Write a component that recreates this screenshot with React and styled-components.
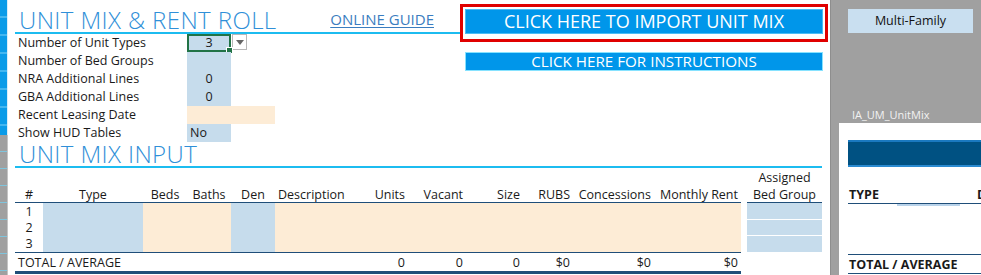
import React from 'react';
import styled, { createGlobalStyle } from 'styled-components';

const blueCell = '#c6dcec';
const peach = '#fdecd6';
const navy = '#1f4e79';
const cyan = '#1cbcf0';
const titleBlue = '#2f8fd8';

const GlobalStyle = createGlobalStyle`
  html, body {
    margin: 0;
    padding: 0;
    background: #a3a3a3;
  }
  body {
    font-family: 'Open Sans', 'Noto Sans', sans-serif;
    color: #1a1a1a;
  }
`;

const settings = [
  { label: 'Number of Unit Types', value: '3', kind: 'selected' },
  { label: 'Number of Bed Groups', value: '', kind: 'blue' },
  { label: 'NRA Additional Lines', value: '0', kind: 'blue' },
  { label: 'GBA Additional Lines', value: '0', kind: 'blue' },
  { label: 'Recent Leasing Date', value: '', kind: 'peach' },
  { label: 'Show HUD Tables', value: 'No', kind: 'blue', left: true }
];

// widths of table columns, left to right
const cols = [28, 100, 44, 44, 44, 87, 46, 58, 57, 50, 81, 87, 6, 75];

const headers = [
  { text: '#', align: 'center' },
  { text: 'Type', align: 'center' },
  { text: 'Beds', align: 'center' },
  { text: 'Baths', align: 'center' },
  { text: 'Den', align: 'center' },
  { text: 'Description', align: 'left' },
  { text: 'Units', align: 'right' },
  { text: 'Vacant', align: 'right' },
  { text: 'Size', align: 'right' },
  { text: 'RUBS', align: 'right' },
  { text: 'Concessions', align: 'right' },
  { text: 'Monthly Rent', align: 'right' }
];

const fills = [null, blueCell, peach, peach, blueCell, peach, peach, peach, peach, peach, peach, peach];

const totals = ['TOTAL / AVERAGE', '', '', '', '', '', '0', '0', '0', '$0', '$0', '$0'];

const App = () => {
  return (
    <>
      <GlobalStyle />
      <Page>
        <EdgeStrip>
          <EdgeBlue />
          <EdgeGray />
        </EdgeStrip>

        <Sheet>
          <TopArea>
            <LeftCol>
              <TitleBar>
                <Title>UNIT MIX &amp; RENT ROLL</Title>
                <GuideLink>ONLINE GUIDE</GuideLink>
              </TitleBar>
              <Settings>
                {settings.map((s) => (
                  <React.Fragment key={s.label}>
                    <SettingLabel>{s.label}</SettingLabel>
                    <SettingValue $kind={s.kind} $left={s.left}>
                      {s.value}
                      {s.kind === 'selected' && <Handle />}
                    </SettingValue>
                    {s.kind === 'selected' ? (
                      <DropCell>
                        <DropButton>
                          <svg width="8" height="5" viewBox="0 0 8 5">
                            <path d="M0 0h8L4 5z" fill="#666" />
                          </svg>
                        </DropButton>
                      </DropCell>
                    ) : s.kind !== 'peach' ? (
                      <span />
                    ) : null}
                  </React.Fragment>
                ))}
              </Settings>
            </LeftCol>
            <RightCol>
              <Highlight>
                <BigButton>CLICK HERE TO IMPORT UNIT MIX</BigButton>
              </Highlight>
              <SmallButton>CLICK HERE FOR INSTRUCTIONS</SmallButton>
            </RightCol>
          </TopArea>

          <SectionBar>
            <Title>UNIT MIX INPUT</Title>
          </SectionBar>

          <Table>
            {cols.map((_, i) => (
              <HeadCell key={`a${i}`} $align="center" $plain>
                {i === 13 ? 'Assigned' : ''}
              </HeadCell>
            ))}
            {headers.map((h) => (
              <HeadCell key={h.text} $align={h.align}>
                {h.text}
              </HeadCell>
            ))}
            <Gap />
            <HeadCell $align="center">Bed Group</HeadCell>

            {[1, 2, 3].map((n) => (
              <React.Fragment key={n}>
                {fills.map((f, i) => (
                  <DataCell key={i} $fill={f} $last={n === 3} $align="center">
                    {i === 0 ? n : ''}
                  </DataCell>
                ))}
                <Gap />
                <GroupCell />
              </React.Fragment>
            ))}

            {totals.map((t, i) => (
              <TotalCell key={i} $align={i === 0 ? 'left' : 'right'}>
                {t}
              </TotalCell>
            ))}
            <Gap />
            <Gap />
          </Table>
        </Sheet>

        <SidePane>
          <TypeBox>Multi-Family</TypeBox>
          <PaneName>IA_UM_UnitMix</PaneName>
          <PreviewCard>
            <PreviewBand />
            <PreviewRow $head>
              <PreviewType>TYPE</PreviewType>
              <PreviewMore>D</PreviewMore>
              <PreviewMark />
            </PreviewRow>
            <PreviewBody />
            <PreviewRow $total>
              <PreviewType>TOTAL / AVERAGE</PreviewType>
            </PreviewRow>
          </PreviewCard>
        </SidePane>
      </Page>
    </>
  );
};

export default App;

const Page = styled.div`
  width: 981px;
  height: 275px;
  display: flex;
  overflow: hidden;
  background: #a3a3a3;
`;

const EdgeStrip = styled.div`
  width: 8px;
  display: flex;
  flex-direction: column;
  flex-shrink: 0;
`;

const EdgeBlue = styled.div`
  height: 135px;
  width: 7px;
  background: repeating-linear-gradient(
    to bottom,
    #0a9be8 0,
    #0a9be8 16px,
    #43b6f0 16px,
    #43b6f0 18px
  );
  border-right: 1px solid #d8eefa;
`;

const EdgeGray = styled.div`
  flex: 1;
  width: 7px;
  background: repeating-linear-gradient(
    to bottom,
    #a0a0a0 0,
    #a0a0a0 16px,
    #7fc4dc 16px,
    #7fc4dc 17px
  );
  border-right: 1px solid #c4c4c4;
`;

const Sheet = styled.div`
  width: 822px;
  height: 275px;
  background: #fff;
  padding-left: 7px;
  box-sizing: border-box;
  flex-shrink: 0;
`;

const TopArea = styled.div`
  display: flex;
`;

const LeftCol = styled.div`
  width: 445px;
`;

const TitleBar = styled.div`
  height: 32px;
  border-bottom: 2px solid ${cyan};
  display: flex;
  align-items: flex-end;
  justify-content: space-between;
  padding-left: 4px;
  padding-right: 26px;
`;

const Title = styled.div`
  font-size: 24px;
  font-weight: 300;
  line-height: 24px;
  color: ${titleBlue};
  letter-spacing: 0.4px;
  white-space: nowrap;
`;

const GuideLink = styled.a`
  font-size: 15px;
  color: #3a7dc0;
  text-decoration: underline;
  text-underline-offset: 2px;
  line-height: 16px;
  padding-bottom: 5px;
  cursor: pointer;
`;

const Settings = styled.div`
  display: grid;
  grid-template-columns: 172px 44px 44px;
  grid-auto-rows: 18px;
`;

const SettingLabel = styled.div`
  font-size: 12.5px;
  line-height: 18px;
  padding-left: 3px;
  white-space: nowrap;
`;

const SettingValue = styled.div`
  position: relative;
  font-size: 12.5px;
  line-height: 18px;
  text-align: ${(p) => (p.$left ? 'left' : 'center')};
  padding-left: ${(p) => (p.$left ? '3px' : '0')};
  background: ${(p) => (p.$kind === 'peach' ? peach : blueCell)};
  grid-column: ${(p) => (p.$kind === 'peach' ? 'span 2' : 'auto')};
  box-shadow: ${(p) => (p.$kind === 'selected' ? 'inset 0 0 0 2px #217346' : 'none')};
`;

const Handle = styled.span`
  position: absolute;
  right: -2px;
  bottom: -2px;
  width: 5px;
  height: 5px;
  background: #217346;
  border: 1px solid #fff;
`;

const DropCell = styled.div`
  padding-left: 1px;
`;

const DropButton = styled.div`
  width: 15px;
  height: 16px;
  box-sizing: border-box;
  border: 1px solid #b8b8b8;
  background: #fff;
  display: flex;
  align-items: center;
  justify-content: center;
`;

const RightCol = styled.div`
  width: 368px;
  padding-top: 4px;
`;

const Highlight = styled.div`
  border: 3px solid #e00000;
  padding: 2px 2px 5px;
`;

const BigButton = styled.div`
  height: 25px;
  box-sizing: border-box;
  background: #0096ea;
  border: 1px solid #4bbcf5;
  color: #fff;
  font-size: 18px;
  line-height: 23px;
  text-align: center;
  cursor: pointer;
`;

const SmallButton = styled.div`
  margin: 10px 0 0 5px;
  width: 358px;
  height: 19px;
  box-sizing: border-box;
  background: #0096ea;
  border: 1px solid #86e2ff;
  color: #fff;
  font-size: 15.2px;
  line-height: 17px;
  text-align: center;
  cursor: pointer;
`;

const SectionBar = styled.div`
  width: 803px;
  height: 24px;
  border-bottom: 2px solid ${cyan};
  display: flex;
  align-items: flex-end;
  padding-left: 4px;
`;

const Table = styled.div`
  display: grid;
  grid-template-columns: ${cols.map((c) => `${c}px`).join(' ')};
  grid-template-rows: 17px 18px 16.5px 16.5px 16.5px 21px;
  font-size: 12.5px;
`;

const alignToJustify = { left: 'flex-start', center: 'center', right: 'flex-end' };

const Cell = styled.div`
  display: flex;
  align-items: center;
  justify-content: ${(p) => alignToJustify[p.$align] || 'flex-start'};
  padding: 0 3px;
  white-space: nowrap;
  box-sizing: border-box;
`;

const HeadCell = styled(Cell)`
  border-bottom: ${(p) => (p.$plain ? 'none' : `1.5px solid ${navy}`)};
  padding-top: 1px;
`;

const Gap = styled.div``;

const DataCell = styled(Cell)`
  background: ${(p) => p.$fill || 'transparent'};
  border-bottom: ${(p) => (p.$last ? `1.5px solid ${navy}` : 'none')};
`;

const GroupCell = styled.div`
  background: ${blueCell};
  border-bottom: 1.5px solid #fff;
`;

const TotalCell = styled(Cell)`
  border-bottom: 3px solid ${navy};
  padding-top: 1px;
`;

const SidePane = styled.div`
  flex: 1;
  background: #a0a0a0;
  border-left: 1px solid #8e8e8e;
  display: flex;
  flex-direction: column;
  overflow: hidden;
`;

const TypeBox = styled.div`
  margin: 9px 0 0 17px;
  width: 125px;
  height: 24px;
  background: #c9dff0;
  font-size: 12.5px;
  line-height: 24px;
  text-align: center;
  color: #111;
`;

const PaneName = styled.div`
  margin: 75px 0 0 21px;
  font-size: 11px;
  line-height: 14px;
  color: #f2f2f2;
  white-space: nowrap;
`;

const PreviewCard = styled.div`
  flex: 1;
  margin-left: 8px;
  margin-top: 1px;
  background: #fff;
  padding: 17px 0 0 9px;
  display: flex;
  flex-direction: column;
  overflow: hidden;
`;

const PreviewBand = styled.div`
  height: 27px;
  box-sizing: border-box;
  background: #005182;
  border-top: 2px solid #1a79c0;
  border-bottom: 2px solid #2a8ad0;
`;

const PreviewRow = styled.div`
  position: relative;
  display: flex;
  align-items: center;
  height: 18px;
  margin-top: ${(p) => (p.$head ? '18px' : '0')};
  border-top: ${(p) => (p.$total ? `1.5px solid ${navy}` : 'none')};
  border-bottom: 1.5px solid ${navy};
  font-size: 12.5px;
  font-weight: 700;
  white-space: nowrap;
`;

const PreviewType = styled.span`
  width: 128px;
  flex-shrink: 0;
  padding-left: 1px;
`;

const PreviewMore = styled.span`
  width: 6px;
  overflow: hidden;
`;

const PreviewMark = styled.span`
  position: absolute;
  left: 49px;
  bottom: -3px;
  width: 63px;
  height: 2px;
  background: #b9d3ea;
`;

const PreviewBody = styled.div`
  height: 50px;
`;
